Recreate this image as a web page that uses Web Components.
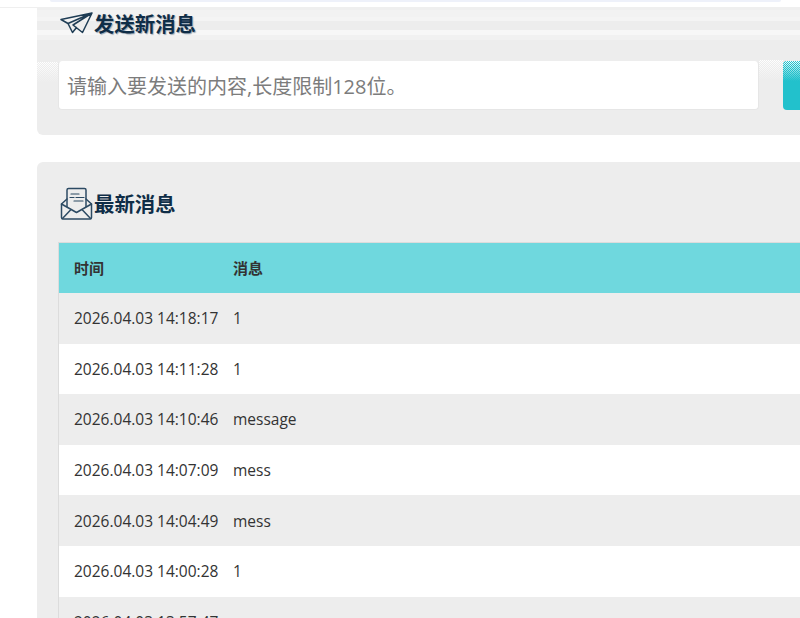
<!DOCTYPE html>
<html lang="zh">
<head>
<meta charset="utf-8">
<style>
html,body{margin:0;padding:0;height:618px;overflow:hidden;background:#fff}
body{font-family:"Open Sans","Noto Sans CJK SC",sans-serif}
</style>
</head>
<body>
<msg-page>
  <send-panel></send-panel>
  <list-panel>
    <msg-row time="2026.04.03 14:18:17" text="1"></msg-row>
    <msg-row time="2026.04.03 14:11:28" text="1" odd></msg-row>
    <msg-row time="2026.04.03 14:10:46" text="message"></msg-row>
    <msg-row time="2026.04.03 14:07:09" text="mess" odd></msg-row>
    <msg-row time="2026.04.03 14:04:49" text="mess"></msg-row>
    <msg-row time="2026.04.03 14:00:28" text="1" odd></msg-row>
    <msg-row time="2026.04.03 13:57:47" text="mess"></msg-row>
  </list-panel>
</msg-page>
<script>
const FONT='"Open Sans","Noto Sans CJK SC",sans-serif';
const BG='#ededed';
function shadow(el,html){el.attachShadow({mode:'open'}).innerHTML=html;}
function dither(c){return `repeating-conic-gradient(${c} 0 25%,transparent 0 50%) 0 0/2px 2px`;}
customElements.define('msg-page',class extends HTMLElement{
  constructor(){super();shadow(this,`<style>
    :host{display:block;width:800px;height:618px;overflow:hidden;font-family:${FONT}}
    .top{height:7px;border-bottom:1px solid #efefef;background:#fff;display:flex}
    .top i{display:block;margin-left:50px;width:731px;height:2px;background:#eef1fa;border-radius:0 0 3px 3px}
    .wrap{display:flex;flex-direction:column;gap:27px;padding-left:37px;width:900px}
  </style><div class="top"><i></i></div><div class="wrap"><slot></slot></div>`);}
});
customElements.define('send-panel',class extends HTMLElement{
  constructor(){super();shadow(this,`<style>
    :host{display:block;background:${BG};border-radius:0 0 6px 6px;height:127px;overflow:hidden}
    .band{height:32px;box-sizing:border-box;padding-left:23px;display:flex;align-items:center;gap:1px;
      background:linear-gradient(#efefef 0 2px,#f2f2f2 2px 9px,#f4f4f4 9px 13px,${BG} 13px 22px,#f7f7f7 22px 27px,#f1f1f1 27px);
      font-size:20.4px;font-weight:700;color:#0f2d47;line-height:32px}
    .band svg{flex:none}
    .band span{text-shadow:1px 1px 1px #9aa8b5}
    .row{display:flex;margin-top:21px}
    .gap{height:21px;margin-top:-1px;background:${dither('#fff')};
      -webkit-mask-image:linear-gradient(#000,transparent);mask-image:linear-gradient(#000,transparent)}
    .g1{width:21px;margin-top:1px}
    .g2{width:24px}
    .in{box-sizing:border-box;width:701px;height:49px;background:#fff;border-radius:4px;border:1px solid #e6e6e6;border-top:0;
      padding:0 8px;line-height:52px;font-size:20px;color:#7c7c7c;white-space:nowrap}
    .btn{position:relative;width:80px;height:49px;border-radius:4px;background:#22c1cc;overflow:hidden}
    .btn::before{content:"";position:absolute;inset:0 0 auto 0;height:20px;background:${dither('#fff')};
      -webkit-mask-image:linear-gradient(#000,transparent);mask-image:linear-gradient(#000,transparent)}
  </style>
  <div class="band">
    <svg width="33" height="24" viewBox="0 0 33 24" fill="none" stroke="#1f3d55" stroke-width="1.5" stroke-linejoin="round" stroke-linecap="round">
      <path d="M1 7.500 32 1 22.500 20.500 13 13 32 1 8 11.500 1 7.500M8 11.500 12.500 20.500 16.500 15.500"/>
    </svg>
    <span>发送新消息</span>
  </div>
  <div class="row"><div class="gap g1"></div><div class="in">请输入要发送的内容,长度限制128位。</div><div class="gap g2"></div><div class="btn"></div></div>`);}
});
customElements.define('list-panel',class extends HTMLElement{
  constructor(){super();shadow(this,`<style>
    :host{display:block;background:${BG};border-radius:6px;height:600px;overflow:hidden;padding:0 0 0 21px}
    .title{height:80px;box-sizing:border-box;padding:2px 0 0 2px;display:flex;align-items:center;gap:1px;
      font-size:20.4px;font-weight:700;color:#0f2d47}
    .title svg{flex:none}
    .table{border-left:1px solid #dcdcdc;background:#fff}
    .head{display:flex;height:51px;align-items:center;background:#6fd8de;border-top:1px solid #dcdcdc;box-sizing:border-box;
      padding-bottom:1px;font-size:15px;font-weight:700;color:#333}
    .head span:first-child{box-sizing:border-box;width:174px;padding-left:15px}
  </style>
  <div class="title">
    <svg width="33" height="33" viewBox="0 0 33 33" fill="none" stroke="#2c4a63" stroke-width="1.5" stroke-linejoin="round" stroke-linecap="round">
      <path d="M7 12 1.500 17V30.500a1.500 1.500 0 0 0 1.500 1.500H30a1.500 1.500 0 0 0 1.500-1.500V17L26 12"/>
      <path d="M7 19.500V3A1.500 1.500 0 0 1 8.500 1.500H24.500A1.500 1.500 0 0 1 26 3V19.500"/>
      <path d="M1.500 17 16.500 25.500 31.500 17M2.500 31.500 11 22.500M30.500 31.500 22 22.500"/>
      <path d="M11 7h8M10 10.500h4M16 10.500h8M14 14h9" stroke-width="1.2"/>
    </svg>
    <span>最新消息</span>
  </div>
  <div class="table">
    <div class="head"><span>时间</span><span>消息</span></div>
    <slot></slot>
  </div>`);}
});
customElements.define('msg-row',class extends HTMLElement{
  constructor(){super();const t=this.getAttribute('time'),m=this.getAttribute('text');shadow(this,`<style>
    :host{display:flex;box-sizing:border-box;height:50.6px;align-items:center;background:${BG};font-size:15.5px;color:#333}
    :host([odd]){background:#fff}
    .a{box-sizing:border-box;width:174px;padding-left:15px;white-space:nowrap}
  </style><span class="a">${t}</span><span>${m}</span>`);}
});
</script>
</body>
</html>
